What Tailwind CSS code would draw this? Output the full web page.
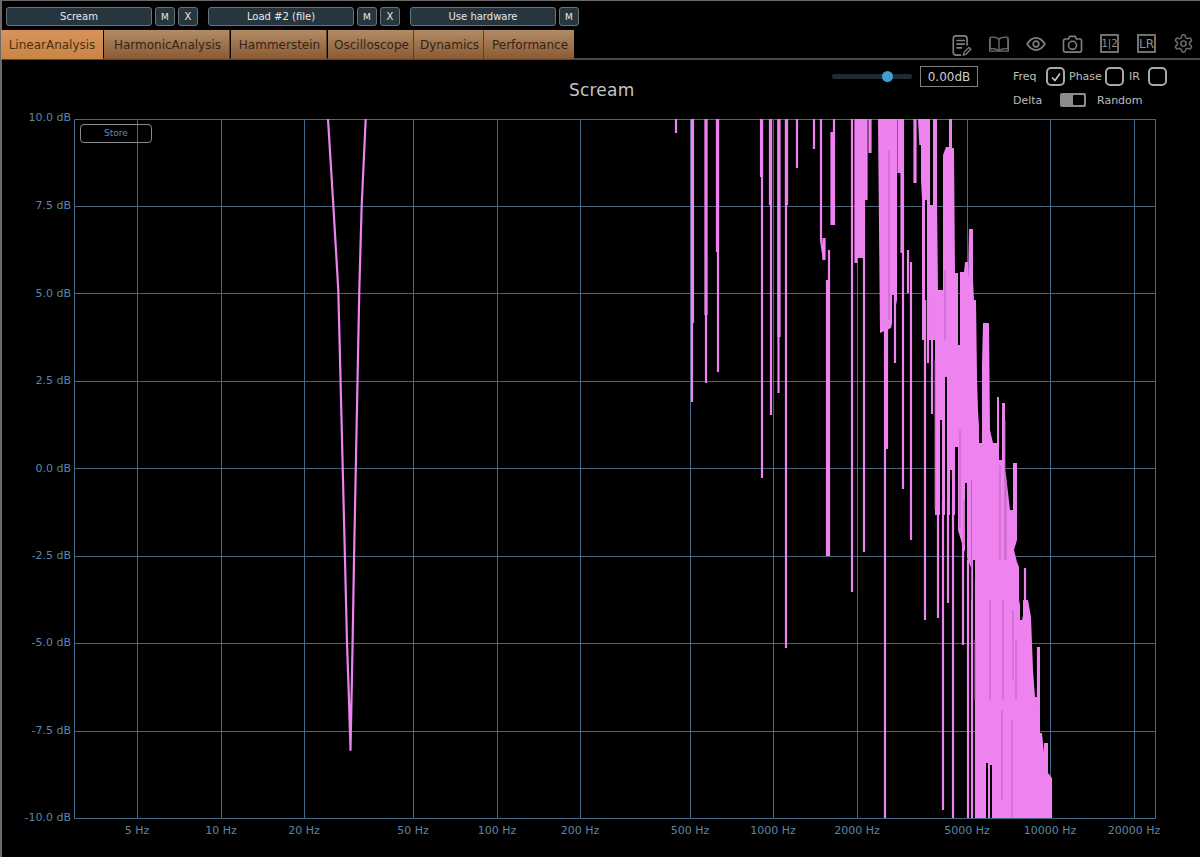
<!DOCTYPE html>
<html>
<head>
<meta charset="utf-8">
<script src="https://cdn.jsdelivr.net/npm/@tailwindcss/browser@4"></script>
</head>
<body class="bg-black font-['DejaVu_Sans',sans-serif] overflow-hidden">
<div class="w-[1200px] h-[857px] flex flex-col relative border-l-2 border-t border-[#6a6a6a] box-border">
  <!-- top bar -->
  <div class="h-[29px] flex items-start pt-[6px] pl-[4px] text-[10px] text-[#e8e8e8] shrink-0">
    <button class="w-[146px] h-[19px] rounded-[3px] border border-[#66757c] bg-[#27363e] text-center leading-[18px]">Scream</button>
    <button class="ml-[3px] w-[20px] h-[19px] rounded-[3px] border border-[#66757c] bg-[#27363e] text-[9px] leading-[18px]">M</button>
    <button class="ml-[3px] w-[20px] h-[19px] rounded-[3px] border border-[#66757c] bg-[#27363e] leading-[18px]">X</button>
    <button class="ml-[10px] w-[146px] h-[19px] rounded-[3px] border border-[#66757c] bg-[#27363e] leading-[18px]">Load #2 (file)</button>
    <button class="ml-[3px] w-[20px] h-[19px] rounded-[3px] border border-[#66757c] bg-[#27363e] text-[9px] leading-[18px]">M</button>
    <button class="ml-[3px] w-[20px] h-[19px] rounded-[3px] border border-[#66757c] bg-[#27363e] leading-[18px]">X</button>
    <button class="ml-[10px] w-[146px] h-[19px] rounded-[3px] border border-[#66757c] bg-[#27363e] leading-[18px]">Use hardware</button>
    <button class="ml-[3px] w-[20px] h-[19px] rounded-[3px] border border-[#66757c] bg-[#27363e] text-[9px] leading-[18px]">M</button>
  </div>
  <!-- tabs + icons -->
  <div class="h-[30px] flex items-stretch shrink-0 border-b-2 border-[#4a4a4a] text-[12px] text-[#33231a]">
    <div class="-ml-[1px] w-[102px] h-[29px] flex items-center justify-center bg-gradient-to-b from-[#d8935a] to-[#c98544] text-[#4a3115]">LinearAnalysis</div>
    <div class="ml-[1px] pl-[2px] w-[126px] h-[29px] flex items-center justify-center border-r border-[#5a4030] bg-gradient-to-b from-[#b28c66] to-[#8a5a32]">HarmonicAnalysis</div>
    <div class="ml-[1px] pl-[2px] w-[96px] h-[29px] flex items-center justify-center border-r border-[#5a4030] bg-gradient-to-b from-[#b28c66] to-[#8a5a32]">Hammerstein</div>
    <div class="ml-[1px] pl-[2px] w-[86px] h-[29px] flex items-center justify-center border-r border-[#5a4030] bg-gradient-to-b from-[#b28c66] to-[#8a5a32]">Oscilloscope</div>
    <div class="pl-[2px] w-[70px] h-[29px] flex items-center justify-center border-r border-[#5a4030] bg-gradient-to-b from-[#b28c66] to-[#8a5a32]">Dynamics</div>
    <div class="pl-[2px] w-[90px] h-[29px] flex items-center justify-center bg-gradient-to-b from-[#b28c66] to-[#8a5a32]">Performance</div>
    <div class="flex-1 flex items-start pt-[5px] pl-[378px] text-[#808080]">
      <svg class="w-[20px] h-[22px]" viewBox="0 0 21 24" fill="none" stroke="#808080" stroke-width="1.8" stroke-linecap="round" stroke-linejoin="round"><path d="M9 22H4a3 3 0 0 1-3-3V4a3 3 0 0 1 3-3h9a3 3 0 0 1 3 3v7"/><path d="M5 6h8M5 10h8M5 14h5"/><path d="M12 22l.7-3 5.500-5.500 2 2-5.500 5.500z" stroke-width="1.400"/></svg>
      <svg class="ml-[16px] mt-[1px] w-[22px] h-[16px]" viewBox="0 0 23 18" fill="none" stroke="#6e6e6e" stroke-width="1.500" stroke-linejoin="round"><path d="M11.500 3.500C9 1.500 5 1 1.500 1.500v13c3.500-.5 7.500 0 10 2 2.500-2 6.500-2.500 10-2v-13C18 1 14 1.500 11.500 3.500z"/><path d="M11.500 3.500v13"/><path d="M1 3v14h21V3"/></svg>
      <svg class="ml-[16px] mt-[2px] w-[20px] h-[14px]" viewBox="0 0 21 15" fill="none" stroke="#808080" stroke-width="1.800"><path d="M1 7.500C4 2.800 7 1 10.500 1S17 2.800 20 7.500C17 12.200 14 14 10.500 14S4 12.200 1 7.500z"/><circle cx="10.500" cy="7.500" r="3"/></svg>
      <svg class="ml-[16px] w-[21px] h-[18px]" viewBox="0 0 22 20" fill="none" stroke="#808080" stroke-width="1.800" stroke-linejoin="round"><path d="M3 4.500h3.500L8 1.500h6l1.500 3H19a2 2 0 0 1 2 2V17a2 2 0 0 1-2 2H3a2 2 0 0 1-2-2V6.500a2 2 0 0 1 2-2z"/><circle cx="11" cy="11.500" r="4.500"/></svg>
      <div class="ml-[17px] -mt-[1px] w-[19px] h-[19px] border-2 border-[#707070] flex items-center justify-center text-[10px] text-[#909090] leading-none">1|2</div>
      <div class="ml-[18px] -mt-[1px] w-[19px] h-[19px] border-2 border-[#707070] flex items-center justify-center text-[12px] text-[#909090] leading-none">LR</div>
      <svg class="ml-[17px] -mt-[2px] w-[21px] h-[21px]" viewBox="0 0 24 24" fill="none" stroke="#6e6e6e" stroke-width="1.700" stroke-linecap="round" stroke-linejoin="round"><path d="M12.220 2h-.44a2 2 0 0 0-2 2v.18a2 2 0 0 1-1 1.730l-.43.25a2 2 0 0 1-2 0l-.15-.08a2 2 0 0 0-2.730.73l-.22.38a2 2 0 0 0 .73 2.730l.15.1a2 2 0 0 1 1 1.720v.51a2 2 0 0 1-1 1.740l-.15.09a2 2 0 0 0-.73 2.730l.22.38a2 2 0 0 0 2.730.73l.15-.08a2 2 0 0 1 2 0l.43.25a2 2 0 0 1 1 1.730V20a2 2 0 0 0 2 2h.44a2 2 0 0 0 2-2v-.18a2 2 0 0 1 1-1.730l.43-.25a2 2 0 0 1 2 0l.15.08a2 2 0 0 0 2.730-.73l.22-.39a2 2 0 0 0-.73-2.730l-.15-.08a2 2 0 0 1-1-1.740v-.5a2 2 0 0 1 1-1.740l.15-.09a2 2 0 0 0 .73-2.730l-.22-.38a2 2 0 0 0-2.730-.73l-.15.08a2 2 0 0 1-2 0l-.43-.25a2 2 0 0 1-1-1.730V4a2 2 0 0 0-2-2z"/><circle cx="12" cy="12" r="3"/></svg>
    </div>
  </div>
  <!-- header of analysis panel -->
  <div class="h-[48px] shrink-0 flex items-start text-[#bdbdbd] text-[11px]">
    <div class="w-[1198px] flex">
      <div class="ml-[567px] mt-[19px] w-[68px] text-[17px] leading-[22px] text-[#c4c4c4] tracking-[0.2px]">Scream</div>
      <div class="ml-[195px] mt-[14px] w-[80px] h-[5px] rounded-full bg-[#1e2b33] relative"><span class="absolute left-[50px] -top-[3px] w-[11px] h-[11px] rounded-full bg-[#3f9fcf]"></span></div>
      <div class="ml-[8px] mt-[6px] w-[58px] h-[21px] border border-[#808080] flex items-center justify-center text-[12px] text-[#cfcfcf]">0.00dB</div>
      <div class="ml-[35px] mt-[7px] w-[154px]">
        <div class="flex items-center h-[19px]">
          <span class="w-[33px] pt-[2px]">Freq</span>
          <span class="w-[19px] h-[19px] rounded-[5px] border-2 border-[#a8a8a8] flex items-center justify-center"><svg class="w-[12px] h-[12px]" viewBox="0 0 12 12" fill="none" stroke="#c8c8c8" stroke-width="1.600"><path d="M2 6.500l3 3 5-7"/></svg></span>
          <span class="ml-[4px] w-[36px] pt-[2px]">Phase</span>
          <span class="w-[19px] h-[19px] rounded-[5px] border-2 border-[#a8a8a8]"></span>
          <span class="ml-[5px] w-[19px] pt-[2px]">IR</span>
          <span class="w-[19px] h-[19px] rounded-[5px] border-2 border-[#a8a8a8]"></span>
        </div>
        <div class="flex items-center h-[14px] mt-[7px]">
          <span class="w-[47px] pt-[2px]">Delta</span>
          <span class="w-[26px] h-[14px] rounded-[2px] bg-[#8c8c8c] flex justify-end p-[2px]"><span class="w-[11px] h-[10px] bg-black rounded-[1px]"></span></span>
          <span class="ml-[11px] pt-[2px]">Random</span>
        </div>
      </div>
    </div>
  </div>
  <!-- plot -->
  <div class="relative flex-1">
    <svg class="block -ml-[2px] w-[1200px] h-[749px]" width="1200" height="749" viewBox="0 108 1200 749" font-family="'DejaVu Sans',sans-serif" font-size="11">
      <g stroke="#456a88" stroke-width="1" fill="none">
        <path d="M74.500 119.500H1155.500V818.500H74.500Z"/>
        <path stroke="#4a6478" d="M74 206.500H1155M74 293.500H1155M74 381.500H1155M74 468.500H1155M74 556.500H1155M74 643.500H1155M74 731.500H1155"/>
        <path d="M137.500 119V818M221.500 119V818M304.500 119V818M413.500 119V818M497.500 119V818M580.500 119V818M690.500 119V818M773.500 119V818M857.500 119V818M967.500 119V818M1050.500 119V818M1134.500 119V818"/>
      </g>
      <g fill="#5b86a8" text-anchor="end">
        <text x="71" y="121">10.0 dB</text><text x="71" y="209">7.5 dB</text><text x="71" y="297">5.0 dB</text><text x="71" y="384">2.5 dB</text><text x="71" y="472">0.0 dB</text><text x="71" y="559">-2.5 dB</text><text x="71" y="646">-5.0 dB</text><text x="71" y="734">-7.5 dB</text><text x="71" y="821">-10.0 dB</text>
      </g>
      <g fill="#5b86a8" text-anchor="middle">
        <text x="137" y="834">5 Hz</text><text x="221" y="834">10 Hz</text><text x="304" y="834">20 Hz</text><text x="413" y="834">50 Hz</text><text x="497" y="834">100 Hz</text><text x="580" y="834">200 Hz</text><text x="690" y="834">500 Hz</text><text x="773" y="834">1000 Hz</text><text x="857" y="834">2000 Hz</text><text x="967" y="834">5000 Hz</text><text x="1050" y="834">10000 Hz</text><text x="1134" y="834">20000 Hz</text>
      </g>
      <!-- main response band -->
      <path fill="#ee82ee" d="M918 119H930V205H933V119H937V197L938 290H943V155L946 147H949V119H952V148H954L955 273H958V300H960V272H964L965 262H968V280L969 229H973V280L974 300H976L977 377 978 410 980 443H982V363L983 323H989L990 430 993 443H997V397H999V460H1002V403H1005V470L1006 475 1010 510H1013V463H1017V540L1014 550 1017 562 1019 567V600L1023 620V600H1028L1031 617 1033 670 1035 697H1037V647H1040V733H1042L1044 753V743H1048V773L1052 778V818H977V585L970 565 963 547 958 530V515H935V340H922V200L918 119Z"/>
      <path fill="#ee82ee" d="M878 119H897V300L891 328 880 333 878 119Z"/>
      <!-- gaps -->
      <g stroke="#000" fill="none">
        <path stroke-width="2" d="M920 145V203M946 377V515M951 470V515M959 300V345M885 300V340M893 295V330M987 763V818M991 765V818M966 483V595M1021 600V620M980 410V443M974 560V583M941 420V515M926 200V340"/>
        <path stroke-width="3" d="M956.500 447V530"/>
      </g>
      <!-- trace -->
      <g stroke="#ee82ee" fill="none" stroke-linejoin="round">
        <path stroke-width="2.200" d="M328 119L333.300 205 338.300 290 345 560 347 643 349 700 350.500 750 351.500 700 352.600 643 354 560 359.300 290 361.700 205 365.700 119"/>
        <path stroke-width="2.200" d="M676 119V133M692 119V402M706 119V383M718 119V372M762 119V478M771 119V415M778.500 119V393M786 119V648M797 119V168M814 119V149M821 119V240L824 260M829 250V556M827 280V556M834 119V225M852 119V592M864 119V552M885 119V818M887 119V449M895 119V363M903 119V489M908 250V293M911 262V540M925 300V620M928 300V363M932 300V414M938 500V618M943 500V810M948 500V603M953 500V818M963 540V645M968 560V818M972 570V818M976 580V818M1025 568V640M1046 743V775M1038 647V710"/>
        <path stroke-width="3.200" d="M692.500 119V323M706 119V315M717.500 119V252M761.500 119V177M770.500 119V205M779 119V337M786.500 119V205M832 132V225M856 119V263M859 119V258M862 119V258M866 119V200M870 119V153M899 119V173M902 119V253M915 119V183M824 238V260"/>
      </g>
      <g stroke="#b75fb7" fill="none" stroke-width="1" opacity="0.9">
        <path d="M960 430V528M971.500 480V600M964 500V545M1003 600V700M1002 710V800M975 640V700M990 600V700M1012 720V818M1016 640V700M1013 610V680M1005 420V560M935 360V510M889 150V320M945 270V340M1000 465V560M1006 480V560"/>
      </g>
    </svg>
    <button class="absolute left-[78px] top-[16px] w-[72px] h-[19px] rounded-[4px] border border-[#8a8a8a] text-[9px] leading-[17px] text-[#5b8db5]">Store</button>
  </div>
</div>
</body>
</html>
